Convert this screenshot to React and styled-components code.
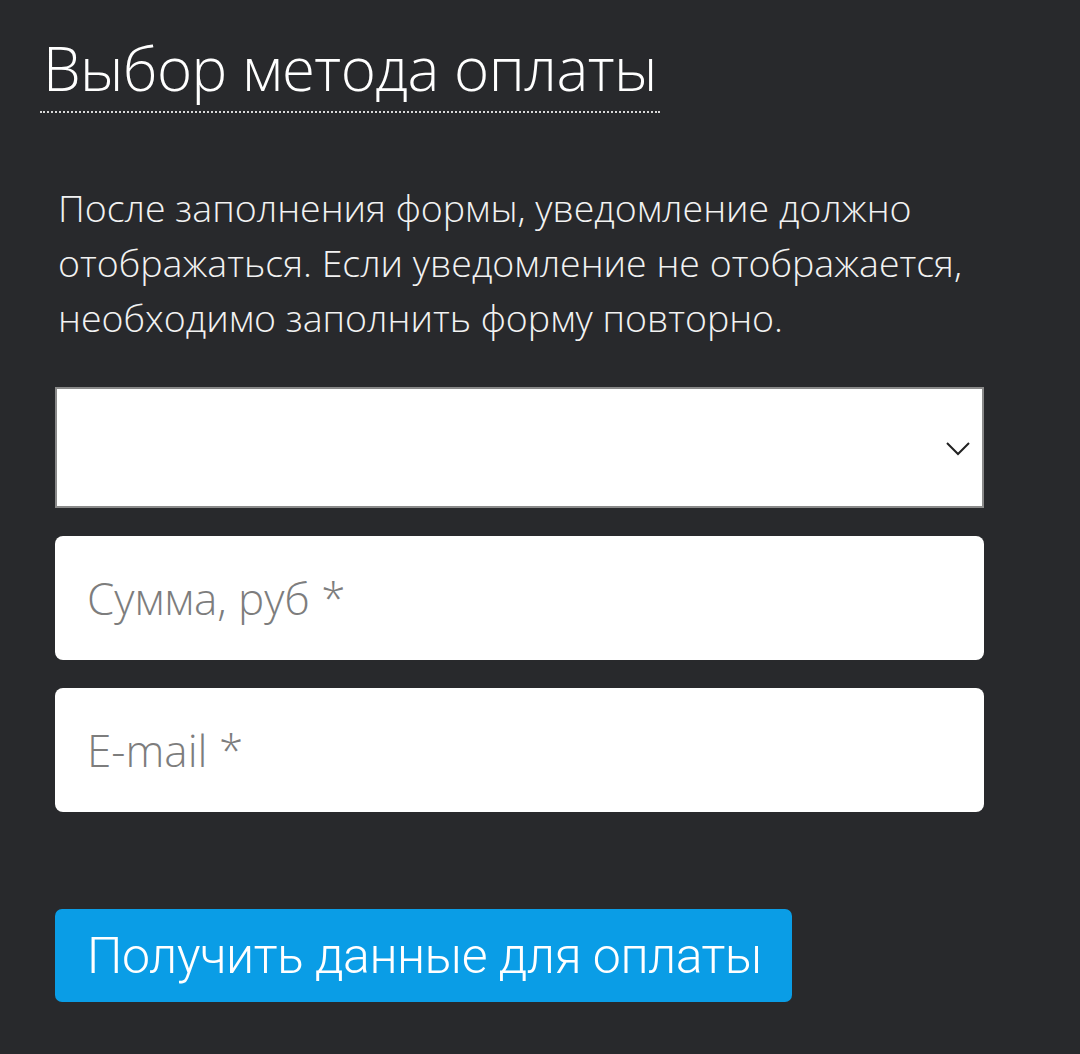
import React from 'react';
import styled, { createGlobalStyle } from 'styled-components';

const Global = createGlobalStyle`
    html, body {
        margin: 0;
        padding: 0;
        background: #28292c;
    }
    body {
        font-family: "Open Sans", "Noto Sans", sans-serif;
        color: #ffffff;
    }
`

const Page = styled.div`
    width: 1080px;
    height: 1054px;
    box-sizing: border-box;
    padding: 28px 96px 0 40px;
    background: #28292c;
`
const Title = styled.h1`
    display: inline-block;
    margin: 0;
    padding: 0 3px 2px;
    font-size: 60px;
    font-weight: 300;
    line-height: 81px;
    letter-spacing: -0.5px;
    border-bottom: 2px dotted #d8d8d8;
`
const Note = styled.p`
    margin: 67px 0 0 18px;
    font-size: 37.5px;
    font-weight: 300;
    line-height: 55px;
    color: #f2f2f2;
`
const Form = styled.form`
    display: flex;
    flex-direction: column;
    gap: 28px;
    margin: 42px 0 0 15px;
`
const SelectBox = styled.div`
    position: relative;
    height: 121px;
    box-sizing: border-box;
    background: #ffffff;
    border: 2px solid #8a8a8a;
`
const Chevron = styled.svg`
    position: absolute;
    right: 12px;
    top: 53px;
`
const Field = styled.input`
    height: 124px;
    box-sizing: border-box;
    border: none;
    border-radius: 8px;
    background: #ffffff;
    padding: 0 32px;
    font-family: "Open Sans", "Noto Sans", sans-serif;
    font-size: 44px;
    font-weight: 300;
    outline: none;
    &::placeholder {
        color: #7d7d7d;
    }
`
const Submit = styled.button`
    align-self: flex-start;
    margin-top: 69px;
    height: 93px;
    padding: 0 30px 0 32px;
    border: none;
    border-radius: 7px;
    background: #0a9de6;
    color: #ffffff;
    font-family: Roboto, sans-serif;
    font-size: 50px;
    font-weight: 300;
    letter-spacing: -0.5px;
`

const App = () => {
    return(
        <Page>
            <Global />
            <Title>Выбор метода оплаты</Title>
            <Note>
                После заполнения формы, уведомление должно отображаться. Если уведомление не отображается, необходимо заполнить форму повторно.
            </Note>
            <Form onSubmit={e => e.preventDefault()}>
                <SelectBox>
                    <Chevron width="24" height="14" viewBox="0 0 24 14">
                        <path d="M1 1 L12 12 L23 1" fill="none" stroke="#222" strokeWidth="2" />
                    </Chevron>
                </SelectBox>
                <Field placeholder="Сумма, руб *" />
                <Field placeholder="E-mail *" />
                <Submit>Получить данные для оплаты</Submit>
            </Form>
        </Page>
    );
};
export default App;
